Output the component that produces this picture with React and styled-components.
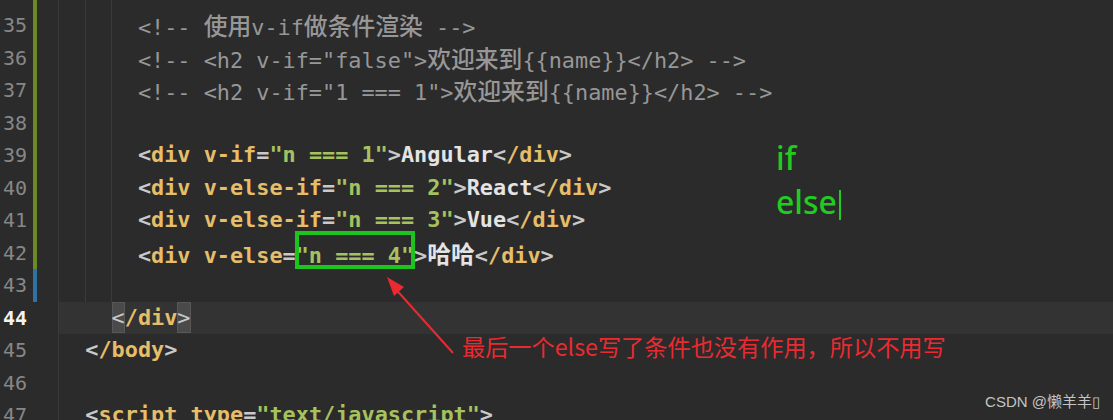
import React from 'react';
import styled, { createGlobalStyle } from 'styled-components';

const Global = createGlobalStyle`
  html, body {
    margin: 0;
    padding: 0;
    background: #2b2b2b;
    overflow: hidden;
  }
`

const Screen = styled.div`
  position: relative;
  width: 1113px;
  height: 420px;
  overflow: hidden;
  background: #2b2b2b;
`

const Editor = styled.div`
  display: flex;
  flex-direction: column;
  margin-top: -23.5px;
`

const Row = styled.div`
  display: grid;
  grid-template-columns: 27px 6px 4px 21px 1fr;
  height: 32.5px;
  line-height: 32.5px;
`

const Num = styled.div`
  text-align: right;
  font-family: "DejaVu Sans Mono", monospace;
  font-size: 20px;
  color: ${p => (p.$active ? '#f2f2f2' : '#878787')};
  font-weight: ${p => (p.$active ? 'bold' : 'normal')};
`

const Mark = styled.div`
  grid-column: 3;
  background: ${p => p.$color || 'transparent'};
`

const Code = styled.div`
  grid-column: 5;
  border-left: 1px solid #3a3a3a;
  padding-left: ${p => p.$indent * 13.15}px;
  white-space: pre;
  font-family: "DejaVu Sans Mono", "Noto Sans CJK SC", monospace;
  font-size: 21.85px;
  background-color: ${p => (p.$active ? '#333333' : 'transparent')};
  background-image: ${p => (p.$guides
    ? 'linear-gradient(#3a3a3a, #3a3a3a), linear-gradient(#3a3a3a, #3a3a3a)'
    : 'none')};
  background-size: 1px 100%, 1px 100%;
  background-position: 26px 0, 52px 0;
  background-repeat: no-repeat;
`

const colors = {
  c: '#979797',
  p: '#c9c9c9',
  t: '#e6bd68',
  s: '#a6c25f',
  x: '#e4e4e4',
}

const Tok = styled.span`
  color: ${p => colors[p.$k]};
  font-weight: ${p => (p.$k === 'c' ? 'normal' : 'bold')};
`

const Cjk = styled.span`
  font-family: "Noto Sans CJK SC", sans-serif;
  font-size: 23.8px;
  color: ${p => colors[p.$k]};
  font-weight: ${p => (p.$k === 'c' ? '500' : 'bold')};
`

const Brace = styled.span`
  display: inline-block;
  height: 31px;
  vertical-align: top;
  margin-top: 0.5px;
  background: #4a4a4a;
  box-shadow: inset 0 0 0 1px #575757;
  color: #c9c9c9;
`

const Highlight = styled.div`
  position: absolute;
  left: 295px;
  top: 231px;
  width: 120px;
  height: 38px;
  box-sizing: border-box;
  border: 4px solid #1ec41e;
`

const Arrow = styled.svg`
  position: absolute;
  left: 370px;
  top: 265px;
`

const Note = styled.div`
  position: absolute;
  left: 462px;
  top: 332px;
  font-family: "Noto Sans CJK SC", "Noto Sans", sans-serif;
  font-size: 23.2px;
  line-height: 28px;
  color: #ea2a30;
  white-space: nowrap;
`

const Scribble = styled.div`
  position: absolute;
  left: 776px;
  top: 136px;
  display: flex;
  flex-direction: column;
  font-family: "Noto Sans", sans-serif;
  font-size: 32px;
  font-weight: 500;
  line-height: 44px;
  color: #20cc20;
`

const Caret = styled.span`
  display: inline-block;
  width: 2px;
  height: 30px;
  margin-left: 2px;
  vertical-align: -6px;
  background: #20cc20;
`

const Watermark = styled.div`
  position: absolute;
  right: 13px;
  bottom: 9px;
  font-family: "Liberation Sans", "Noto Sans CJK SC", sans-serif;
  font-size: 15px;
  color: #c4c4c4;
`

const lines = [
  { n: '', bar: '#6b8a22', guides: true, indent: 0, toks: [] },
  { n: 35, bar: '#6b8a22', guides: true, indent: 6, toks: [['c', '<!-- '], ['cj', '使用'], ['c', 'v-if'], ['cj', '做条件渲染'], ['c', ' -->']] },
  { n: 36, bar: '#6b8a22', guides: true, indent: 6, toks: [['c', '<!-- <h2 v-if="false">'], ['cj', '欢迎来到'], ['c', '{{name}}</h2> -->']] },
  { n: 37, bar: '#6b8a22', guides: true, indent: 6, toks: [['c', '<!-- <h2 v-if="1 === 1">'], ['cj', '欢迎来到'], ['c', '{{name}}</h2> -->']] },
  { n: 38, bar: '#6b8a22', guides: true, indent: 0, toks: [] },
  { n: 39, bar: '#6b8a22', guides: true, indent: 6, toks: [['p', '<'], ['t', 'div v-if'], ['p', '='], ['s', '"n === 1"'], ['p', '>'], ['x', 'Angular'], ['p', '<'], ['t', '/div'], ['p', '>']] },
  { n: 40, bar: '#6b8a22', guides: true, indent: 6, toks: [['p', '<'], ['t', 'div v-else-if'], ['p', '='], ['s', '"n === 2"'], ['p', '>'], ['x', 'React'], ['p', '<'], ['t', '/div'], ['p', '>']] },
  { n: 41, bar: '#6b8a22', guides: true, indent: 6, toks: [['p', '<'], ['t', 'div v-else-if'], ['p', '='], ['s', '"n === 3"'], ['p', '>'], ['x', 'Vue'], ['p', '<'], ['t', '/div'], ['p', '>']] },
  { n: 42, bar: '#6b8a22', guides: true, indent: 6, toks: [['p', '<'], ['t', 'div v-else'], ['p', '='], ['s', '"n === 4"'], ['p', '>'], ['xj', '哈哈'], ['p', '<'], ['t', '/div'], ['p', '>']] },
  { n: 43, bar: '#2f72a6', guides: true, indent: 0, toks: [] },
  { n: 44, active: true, indent: 4, toks: [['b', '<'], ['t', '/div'], ['b', '>']] },
  { n: 45, indent: 2, toks: [['p', '<'], ['t', '/body'], ['p', '>']] },
  { n: 46, indent: 0, toks: [] },
  { n: 47, indent: 2, toks: [['p', '<'], ['t', 'script type'], ['p', '='], ['s', '"text/javascript"'], ['p', '>']] },
]

const renderTok = ([k, text], i) => {
  if (k === 'cj') return <Cjk key={i} $k="c">{text}</Cjk>
  if (k === 'xj') return <Cjk key={i} $k="x">{text}</Cjk>
  if (k === 'b') return <Brace key={i}>{text}</Brace>
  return <Tok key={i} $k={k}>{text}</Tok>
}

const App = () => {
  return (
    <Screen>
      <Global />
      <Editor>
        {lines.map((l, i) => (
          <Row key={i}>
            <Num $active={l.active}>{l.n}</Num>
            <Mark $color={l.bar} />
            <Code $indent={l.indent} $guides={l.guides} $active={l.active}>
              {l.toks.map(renderTok)}
            </Code>
          </Row>
        ))}
      </Editor>

      <Highlight />

      <Arrow width="100" height="100" viewBox="0 0 100 100">
        <line x1="83" y1="88" x2="22" y2="20" stroke="#ea2a30" strokeWidth="2" />
        <polygon points="17,12 34,22 24,31" fill="#ea2a30" />
      </Arrow>

      <Note>最后一个else写了条件也没有作用，所以不用写</Note>

      <Scribble>
        <span>if</span>
        <span>else<Caret /></span>
      </Scribble>

      <Watermark>CSDN @懒羊羊▯</Watermark>
    </Screen>
  )
}

export default App;
